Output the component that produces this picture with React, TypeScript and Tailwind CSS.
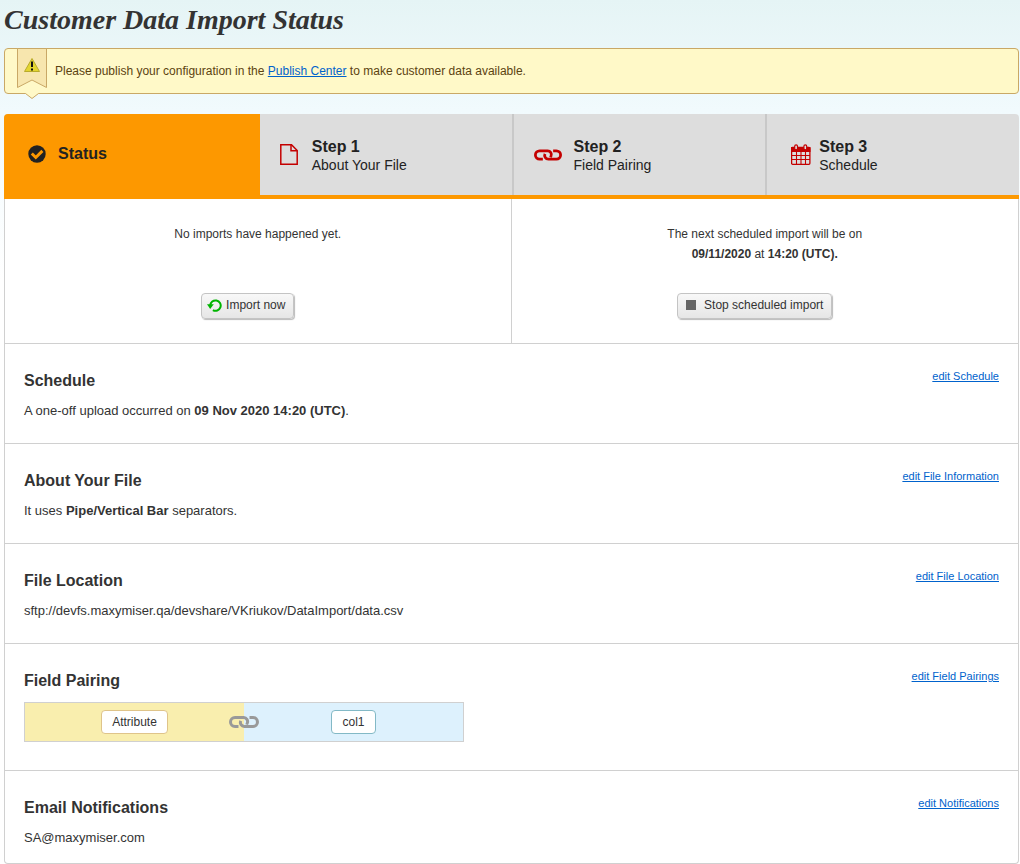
import type { ReactNode } from "react";

const LinkIcon = ({ className }: { className: string }) => (
  <svg viewBox="0 0 30 12" className={className} fill="none" stroke="currentColor" strokeWidth="3" aria-hidden="true">
    <path d="M9.500 10.500H6a4.500 4.500 0 0 1 0-9H14.500a4 4 0 0 1 3.700 5.700l-1.400-.4" />
    <path d="M20.500 1.500H24a4.500 4.500 0 0 1 0 9H15.500a4 4 0 0 1-3.700-5.700" />
  </svg>
);

const CheckIcon = () => (
  <svg viewBox="0 0 18 18" className="h-[18px] w-[18px]" aria-hidden="true">
    <circle cx="9" cy="9" r="8.700" fill="#222" />
    <path d="M3.800 8.500l4 4 6.600-6.600" fill="none" stroke="#fd9800" strokeWidth="3" />
  </svg>
);

const FileIcon = () => (
  <svg viewBox="0 0 18 21" className="h-[21px] w-[18px]" fill="none" stroke="#c40000" strokeWidth="1.500" aria-hidden="true">
    <path d="M.8.800h10.700l5.700 5.700v13.700H.8z" />
    <path d="M11 .800v6h6.200" />
  </svg>
);

const CalendarIcon = () => (
  <svg viewBox="0 0 20 21" className="h-[21px] w-5" aria-hidden="true">
    <rect x=".6" y="3.500" width="18.300" height="16.800" rx="1" fill="#ddd" stroke="#c40000" strokeWidth="1.300" />
    <path d="M0 3h19.500v5H0z" fill="#c40000" />
    <path d="M5.500 8v12M10 8v12M14.500 8v12M1 11.500h18M1 15.500h18" stroke="#c40000" strokeWidth="1.100" />
    <rect x="3.700" y=".8" width="2.800" height="5" rx="1.400" fill="#ddd" stroke="#c40000" strokeWidth="1.200" />
    <rect x="12.900" y=".8" width="2.800" height="5" rx="1.400" fill="#ddd" stroke="#c40000" strokeWidth="1.200" />
  </svg>
);

const RefreshIcon = () => (
  <svg viewBox="0 0 15 14" className="h-[14px] w-[15px]" aria-hidden="true">
    <path d="M3.300 7.500a5.200 5.200 0 1 1 2.600 4.600" fill="none" stroke="#00b400" strokeWidth="2" />
    <path d="M0 6.300h6.800L3.200 11z" fill="#00b400" />
  </svg>
);

const StopIcon = () => (
  <svg viewBox="0 0 10 10" className="h-[10px] w-[10px]" aria-hidden="true">
    <path d="M0 0h10v10H0z" fill="#666" />
  </svg>
);

const Ribbon = () => (
  <svg viewBox="0 0 30 51" className="absolute -top-px left-3 h-[51px] w-[30px]" aria-hidden="true">
    <path d="M8.500 45.500l6.500 5 6.500-5v-1.500h-13z" fill="#fff9c8" />
    <path d="M8.500 45.500l6.500 5 6.500-5" fill="none" stroke="#c9a866" />
    <path d="M.5.500h29v39L15 32 .5 39.500z" fill="#f7e6ae" stroke="#c9a866" />
    <path d="M15 10.500l7.500 13h-15z" fill="#e3d52f" stroke="#b9ab2b" strokeLinejoin="round" />
    <path d="M15 13.500v5.500M15 20.500v2" stroke="#111" strokeWidth="2" />
  </svg>
);

const steps = [
  { title: "Step 1", label: "About Your File", icon: <FileIcon />, style: "border-[#fd9800] pl-5 gap-[14px]" },
  { title: "Step 2", label: "Field Pairing", icon: <LinkIcon className="h-3 w-7 text-[#c40000]" />, style: "border-[#c8c8c8] pl-5 gap-3" },
  { title: "Step 3", label: "Schedule", icon: <CalendarIcon />, style: "border-[#c8c8c8] pl-6 gap-2" },
];

const ActionButton = ({ icon, children }: { icon: ReactNode; children: ReactNode }) => (
  <button
    type="button"
    className="mr-5 flex h-[26px] items-center rounded border border-[#c4c4c4] bg-linear-to-b from-[#f8f8f8] to-[#e6e6e6] pr-2 pb-[2px] shadow-[1px_1px_1px_#bbb]"
  >
    {icon}
    {children}
  </button>
);

const Section = ({ title, link, children }: { title: string; link: string; children: ReactNode }) => (
  <section className="flex items-start justify-between border-b border-[#d0d0d0] px-[19px] pt-[26px] pb-[22px] last:border-b-0 last:pb-[15px]">
    <div>
      <h2 className="mt-px mb-[10px] text-base leading-5 font-bold">{title}</h2>
      {children}
    </div>
    <a href="#" className="text-[11px] leading-3 text-[#0062cc] underline">
      {link}
    </a>
  </section>
);

const App = () => {
  return (
    <main className="min-h-screen bg-[linear-gradient(to_bottom,#e5f4f5,#f1fafd_110px,#ffffff_280px)] pr-px pl-1 font-['Liberation_Sans',Arial,sans-serif] text-xs text-[#333]">
      <h1 className="pt-1 font-['Liberation_Serif',Georgia,serif] text-[28px] leading-8 font-bold italic">
        Customer Data Import Status
      </h1>

      <div className="relative mt-3 flex h-[46px] items-center rounded border border-[#c9a866] bg-[#fff9c8] pl-[50px] text-[#5c4310]">
        <Ribbon />
        <p>
          Please publish your configuration in the{" "}
          <a href="#" className="text-[#0062cc] underline">Publish Center</a> to make customer data available.
        </p>
      </div>

      <nav className="mt-5 grid grid-cols-4 overflow-hidden rounded-t border-b-4 border-[#fd9800] bg-[#ddd] text-[#222]">
        <a href="#" className="flex h-[81px] items-center gap-3 bg-[#fd9800] pb-[2px] pl-6 text-base font-bold">
          <CheckIcon />
          Status
        </a>
        {steps.map((step) => (
          <a key={step.title} href="#" className={`flex items-center border-l-2 ${step.style}`}>
            {step.icon}
            <span className="pt-[2px]">
              <span className="block text-base leading-[19px] font-bold">{step.title}</span>
              <span className="block text-sm leading-[19px]">{step.label}</span>
            </span>
          </a>
        ))}
      </nav>

      <div className="rounded-b border border-t-0 border-[#d0d0d0] bg-white">
        <div className="grid grid-cols-2 border-b border-[#d0d0d0] text-center leading-5">
          <div className="flex h-36 flex-col items-center justify-between border-r border-[#d0d0d0] pt-[25px] pb-6">
            <p>No imports have happened yet.</p>
            <ActionButton icon={<span className="mr-1 ml-[5px]"><RefreshIcon /></span>}>Import now</ActionButton>
          </div>
          <div className="flex h-36 flex-col items-center justify-between pt-[25px] pb-6">
            <p>
              The next scheduled import will be on
              <br />
              <b>09/11/2020</b> at <b>14:20 (UTC).</b>
            </p>
            <ActionButton icon={<span className="mr-2 ml-2"><StopIcon /></span>}>Stop scheduled import</ActionButton>
          </div>
        </div>

        <Section title="Schedule" link="edit Schedule">
          <p className="text-[13px] leading-5">
            A one-off upload occurred on <b>09 Nov 2020 14:20 (UTC)</b>.
          </p>
        </Section>
        <Section title="About Your File" link="edit File Information">
          <p className="text-[13px] leading-5">
            It uses <b>Pipe/Vertical Bar</b> separators.
          </p>
        </Section>
        <Section title="File Location" link="edit File Location">
          <p className="text-[13px] leading-5">sftp://devfs.maxymiser.qa/devshare/VKriukov/DataImport/data.csv</p>
        </Section>
        <Section title="Field Pairing" link="edit Field Pairings">
          <div className="relative mt-[11px] mb-[6px] grid h-10 w-[440px] grid-cols-2 border border-[#d0d0d0]">
            <div className="flex items-center justify-center bg-[#f9eeae]">
              <span className="rounded border border-[#dfc48a] bg-white px-[10px] leading-[22px]">Attribute</span>
            </div>
            <div className="flex items-center justify-center bg-[#ddf1fd]">
              <span className="rounded border border-[#83b9c6] bg-white px-[10px] leading-[22px]">col1</span>
            </div>
            <div className="absolute inset-0 flex items-center justify-center">
              <LinkIcon className="h-3 w-[30px] text-[#999]" />
            </div>
          </div>
        </Section>
        <Section title="Email Notifications" link="edit Notifications">
          <p className="text-[13px] leading-5">SA@maxymiser.com</p>
        </Section>
      </div>
    </main>
  );
};

export default App;
